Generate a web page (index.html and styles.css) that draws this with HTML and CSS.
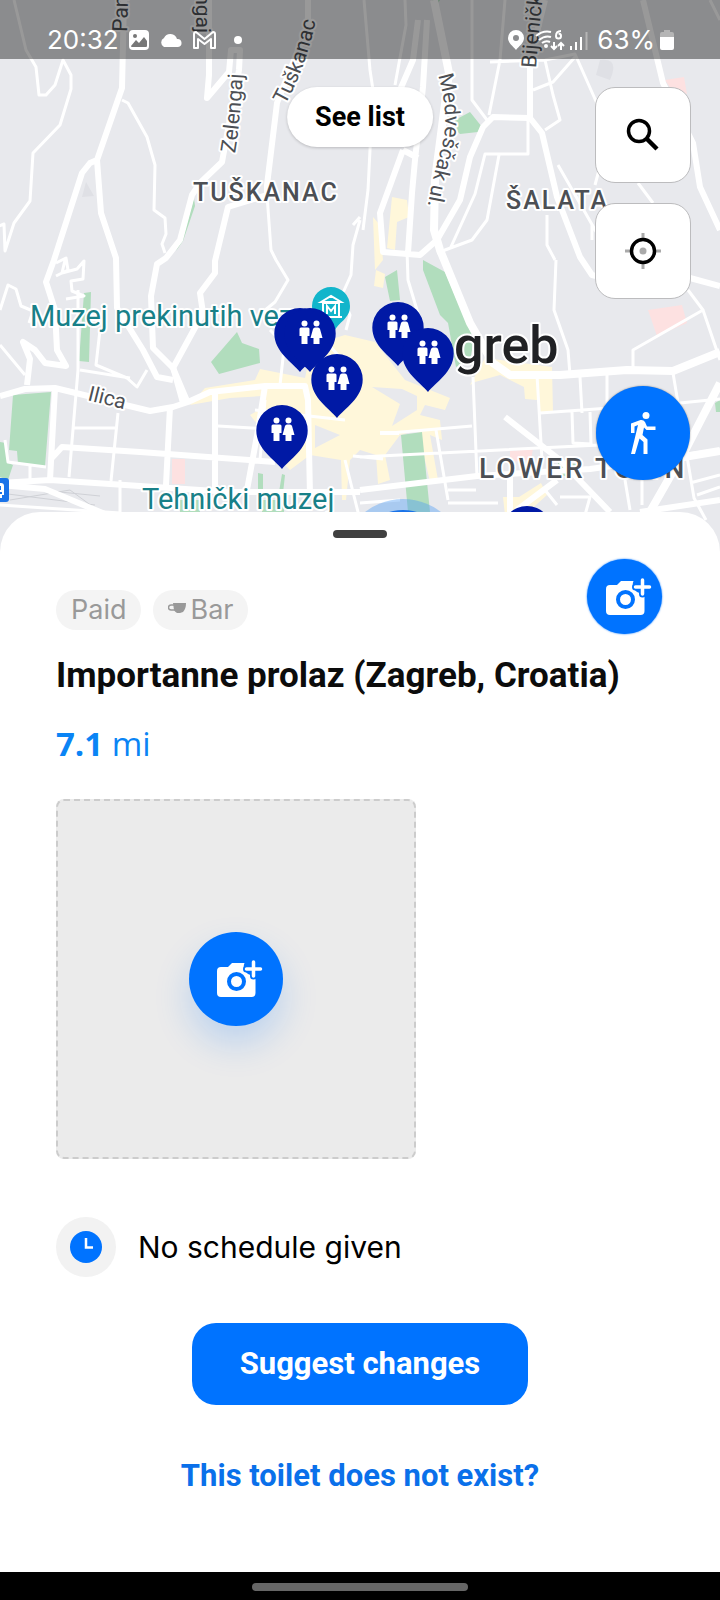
FILE: index.html
```html
<!DOCTYPE html>
<html lang="en">
<head>
<meta charset="utf-8">
<meta name="viewport" content="width=device-width, initial-scale=1">
<title>Importanne prolaz</title>
<link rel="stylesheet" href="styles.css">
</head>
<body>
<svg class="sprite" aria-hidden="true">
  <symbol id="camera-plus" viewBox="0 0 46 38">
    <path d="M4 7h7l4-4h12.500a8.500 8.500 0 0 0 7.500 12h3.500v18a4 4 0 0 1-4 4H4a4 4 0 0 1-4-4V11a4 4 0 0 1 4-4z" fill="#fff"/>
    <circle cx="19.500" cy="21.500" r="7.500" fill="none" stroke="#0073ff" stroke-width="4"/>
    <path d="M36.500 2v14M29.500 9h14" stroke="#0073ff" stroke-width="7" stroke-linecap="round"/>
    <path d="M36.500 2v14M29.500 9h14" stroke="#fff" stroke-width="3.500" stroke-linecap="round"/>
  </symbol>
  <symbol id="pin-shape" viewBox="-26 0 52 64" overflow="visible">
    <path d="M0 64C-7 55-25.700 44-25.700 25.500A25.700 25.500 0 0 1 25.700 25.500C25.700 44 7 55 0 64z" fill="#0019a5"/>
  </symbol>
  <symbol id="pin" viewBox="-26 0 52 64" overflow="visible">
    <path d="M0 64C-7 55-25.700 44-25.700 25.500A25.700 25.500 0 0 1 25.700 25.500C25.700 44 7 55 0 64z" fill="#0019a5"/>
    <g fill="#fff">
      <circle cx="-5.500" cy="15.500" r="3"/><circle cx="6.500" cy="15.500" r="3"/>
      <path d="M-9 19.500h7q1.500 0 1.500 1.500v7h-2v8h-6v-8h-2v-7q0-1.500 1.500-1.500zM5 19.500h3q1.500 0 2 1.500l2.500 9h-3v6h-6v-6h-3l2.500-9q.5-1.500 2-1.500z"/>
    </g>
  </symbol>
</svg>

<div class="screen">
  <section class="map" aria-label="Map">
    <svg class="map-canvas" viewBox="0 0 720 552" preserveAspectRatio="xMidYMin slice">
      <rect width="720" height="552" fill="#e8e9ed"/>
      <g fill="#fff7da">
        <path d="M190 405l15-17 50-8 5-11 45 9 7-33 33-10 30 7 30 38 45 18-5 12-20-5-5 10 20 5 2 20-12-5 8 45-8 2-12-52-18 5-15 20 5 25-12 4-2-29-16-5-10 10-4 40h-4l-1-40-31-5-20 15-5-5 15-15-38-20-12-15 12-7v-12l-32 2z"/>
        <path d="M470 385l15-27 67 9 1 46-13-1-3-12-12-1-1-12-24-12-25 7z"/>
        <path d="M392 197l15 3 2 17-12 5-2 28-8-2zM373 217l7 8 3 35-8 10zM376 270l9 4-2 14-9-2zM503 497l16 0 22-14 6 12-22 20h-20z"/>
      </g>
      <path d="M315 425l25 10-25 13zM372 387l30 2 15 7v14l-25 16 8-22z" fill="#e8e9ed"/>
      <g fill="#b1ddbd">
        <path d="M13 395l38-3-6 74-27-2-1-13-8-1zM0 442l6 1 2 20 5 2-5 15-8-3zM84 293l7-1-2 70-10-1zM237 332l5 11 17 6 1 14-41 11-8-12z"/>
        <path d="M423 260l22 12 29 68-4 20-14 7-8-44-8-8-17-45zM385 277l12-7 3 30-10 1zM401 435l21-3 8 80h-22zM455 120l15-8 12 15-4 5-18 2-7-7z"/>
        <path d="M194 198l1 8-12 35-7 10 8-17zM258 473l5 1v20h-5zM282 474l3 1-2 18-4-1zM180 500h20v12h-20zM262 500h22v12h-22zM558 462l18 2-2 12h-16zM715 403l5-3v12h-4zM432 0h8l-4 6z"/>
      </g>
      <path d="M172 459h13v25h-13zM648 310l34-5 5 18-30 13zM510 451l23-2-2 11-21 2zM665 80l19-3 3 17-16-5z" fill="#fde1e1"/>
      <path d="M600 60q20-3 10 20l-14-5zM82 197l4-15 8 14z" fill="#dfe0e5"/>
      <path d="M0 486l100 10M0 493l95 12M10 500l60-10 30 22" class="rail"/>
      <g class="road thin">
        <path d="M14 0l12 50 10 17 3 28h7l9-10 8-25 8 15v14l-11 36-27 28-3 48-16 22-9 28-1-27-7 3M122 100l6 3 19 34 8 28-1 45 11 8 1 16-4 10 3 9M56 263l10-5 2 12-12 6M65 260l-3 13 15-4 7-8-1 18-12 2 1 10 12 5-18 3"/>
        <path d="M267 195l4 55 5 10 12 20-13 22-17 14M360 220l-7 25-2 30-9 20 8 20-4 15M353 225l7-8M0 310l8-25 8 4 5 17 12 5-4 12M0 345l25 30M78 290v80l-9 107M100 330l-4 35 31 13 10 9 10-17M80 370l50 8M118 413l-7 68M73 428h42M120 480v32M30 465v15M5 440l3 22 38 5M218 426l50 3M265 400l-5 60M285 340l-5 45M270 330l10 10 40-5 18 20"/>
        <path d="M364 0l6 70 3 20-5 100-5 40M405 0l1 25-11 60M472 0v100l15 20M505 0l-5 60-11 55M490 62l55-2 30-6 20 45 15 30M545 60l8 35 7 25-15 10M533 90l20-8 22-25M528 120v34h-43l-10 40-25 55M499 155l-12 65-15 20-35 13M547 215v30l8 15M558 165l40 70M595 185l8-30-5-20M638 183l15 20M592 240l0-15M720 20l-10-20"/>
        <path d="M407 250l1 30 15 50M556 260l-2 50 14 40 2 25M473 377l4 100M537 375l5 85M540 413l140-10 40-4M360 457l260-13M580 377l2 36M607 375v37M572 412l1 31 18 1-1-32M673 373l21 125 12 22M633 370v-20l70-40-15-20M703 310l17 50M390 433l82-7M436 430l12 70M448 490h28M448 503h50M560 497h30l-5 18M545 490l12 15M360 503l40-3M690 483l30-8M642 480v25M697 495l23-8M625 480l5 30M0 505l120 8M345 460l15 60M353 456l30 3M255 410l90 10"/>
      </g>
      <path d="M380 433h19" stroke="#fff" stroke-width="4"/>
      <g class="road">
        <path d="M124 0l-2 88-25 72-7 3-8 10-28 87-8 22 9 28 2 40 9 16-21-3-10-13-12-8 7 17-3 26M97 160l4 53 15 45 1 50 26 42 14 27 16 3M209 0v75l-2 23 22-26 2-22h9l-1 20-17 92-22 21-8 12-12 45-14 18-9 6-6 32 2 52 20 20 14 33M308 0v25l-31 78-10 82 0 10-39 12-13 54v12l-15 20 3 20-30 55"/>
        <path d="M0 396l25-7 30-1 95 23 23-4 15-5 22-10 55-6h40l3 14 2 96M55 388l-5 92-50 3M50 460l12-13 78 5 135 10M50 480l180 12h130M170 407l-4 78M215 392v100M265 386l-7 44-11 60M0 485l45 4 60 25M173 367l10 36"/>
        <path d="M418 20l-5 40-13 30M427 20l-4 67-8 73-3 33-4 60M403 150l15 8M403 150l-23 63 3 39 37 3 17-15 23-40 10-43 13-30 10-10 37 1 12 15 15 64 23 60 12 18 50 12M530 118V60l15-60M643 0l20 83 30 60 7 44 20 43M690 278l30 8"/>
        <path d="M360 490l117-14 113-7 130-18M505 417l55 43 50 52M510 477v35M517 510l40-30M640 512l80-12" />
      </g>
      <path class="road wide" d="M434 0l15 73-14 107-1 50 6 20 30 73 23 40 17 12h50l67-5 46 1 47-19M720 383l-33 64-40 70M720 451l-60 10"/>

      <g class="label street">
        <path id="l-med" d="M438 75Q450 115 442 146Q433 175 427 210" fill="none" stroke="none"/>
        <path id="l-zel" d="M235 153Q240 125 243 70" fill="none" stroke="none"/>
        <path id="l-tus" d="M285 105Q305 70 316 20" fill="none" stroke="none"/>
        <path id="l-bij" d="M536 68Q538 35 548 -50" fill="none" stroke="none"/>
        <text><textPath href="#l-med">Medveščak ul.</textPath></text>
        <text><textPath href="#l-zel">Zelengaj</textPath></text>
        <text><textPath href="#l-tus">Tuškanac</textPath></text>
        <text><textPath href="#l-bij">Bijenička</textPath></text>
        <text transform="translate(127 32) rotate(-88)">Pan</text>
        <text transform="translate(196 33) rotate(90)" text-anchor="end">ngaj</text>
        <text transform="translate(87 400) rotate(14)">Ilica</text>
      </g>
      <g class="label district">
        <text x="193" y="201">TUŠKANAC</text>
        <text x="506" y="209">ŠALATA</text>
        <text class="large" x="479" y="478">LOWER TOWN</text>
      </g>
      <g class="label museum">
        <text x="30" y="326">Muzej prekinutih vez</text>
        <text x="142" y="509">Tehnički muzej</text>
      </g>
      <text class="label city" x="454" y="363">greb</text>

      <path d="M331 287a19 19 0 0 1 19 19c0 13-11 15-17 27-8-10-21-14-21-27a19 19 0 0 1 19-19z" fill="#12b5cb"/>
      <path d="M321 302l10-6 10 6zM322 303h18M323 304v12M339 304v12M320 317h22M327 314v-8l4 5 4-5v8" fill="none" stroke="#fff" stroke-width="2"/>
      <rect x="-14" y="478" width="23" height="24" rx="3" fill="#1a73e8"/>
      <path d="M-8 483h9q3 0 3 3v9h-2v3h-3v-3h-7z" fill="#fff"/><path d="M-4 486h5v4h-5zM0 492h2v2H0z" fill="#1a73e8"/>
      <circle cx="403" cy="561" r="62" fill="#4a9af5" opacity=".4"/>
      <circle cx="403" cy="561" r="51" fill="#1a73e8"/>
      <use href="#pin-shape" x="274" y="308" width="52" height="64"/>
      <use href="#pin" x="284" y="308" width="52" height="64"/>
      <use href="#pin" x="372" y="302" width="52" height="64"/>
      <use href="#pin" x="402" y="328" width="52" height="64"/>
      <use href="#pin" x="311" y="354" width="52" height="64"/>
      <use href="#pin" x="256" y="405" width="52" height="64"/>
      <use href="#pin" x="501" y="506" width="52" height="64"/>
    </svg>

    <header class="status-bar">
      <div class="status-group">
        <span>20:32</span>
        <svg width="22" height="22" viewBox="0 0 22 22"><rect x="1" y="1" width="20" height="20" rx="4" fill="#fff"/><circle cx="7" cy="7" r="2" fill="#777"/><path d="M3 17l5-6 3 3 5-6 3 4v5q0 1-1 1H4q-1 0-1-1z" fill="#777"/></svg>
        <svg width="24" height="22" viewBox="0 0 24 22"><path d="M5 18a5 5 0 0 1 0-9 7 7 0 0 1 13 1 4 4 0 0 1 1 8z" fill="#fff"/></svg>
        <svg width="25" height="22" viewBox="0 0 25 22"><path d="M2 19V5q0-2 2-2l8.500 7L21 3q2 0 2 2v14h-4v-9l-6.500 5L6 10v9z" fill="none" stroke="#fff" stroke-width="2" stroke-linejoin="round"/></svg>
        <i class="dot"></i>
      </div>
      <div class="status-group status-end">
        <svg class="place" width="18" height="22" viewBox="0 0 18 22"><path d="M9 1a8 8 0 0 1 8 8c0 5-5 8-8 12C6 17 1 14 1 9a8 8 0 0 1 8-8zm0 5a3 3 0 1 0 0 6 3 3 0 0 0 0-6z" fill="#fff" fill-rule="evenodd"/></svg>
        <svg width="30" height="22" viewBox="0 0 30 22" fill="none" stroke="#fff" stroke-width="2"><path d="M1 7q7-6 15-4M4 11q6-5 12-3M7 14q4-3 8-1M26 2q-5 0-5 5a2.500 2.500 0 1 0 2.500-2.500"/><circle cx="11" cy="17" r="1" fill="#fff"/><path d="M19 13v7m-3-3l3 3 3-3M26 21v-7m-3 3l3-3 3 3"/></svg>
        <svg width="20" height="22" viewBox="0 0 20 22"><path d="M2 17v4M7 13v8M12 8v13" stroke="#fff" stroke-width="2"/><path d="M17.500 3v18" stroke="#b5b5b5" stroke-width="2"/></svg>
        <span class="battery">63%</span>
        <svg width="16" height="22" viewBox="0 0 16 22"><path d="M5 1h6v2h2q2 0 2 2v4H1V5q0-2 2-2h2z" fill="#b5b5b5"/><path d="M1 8h14v11q0 2-2 2H3q-2 0-2-2z" fill="#fff"/></svg>
      </div>
    </header>

    <button class="see-list" type="button">See list</button>
    <div class="map-controls">
      <button class="square" type="button" aria-label="Search">
        <svg width="36" height="36" viewBox="0 0 36 36" fill="none" stroke="#000"><circle cx="14" cy="14" r="10.500" stroke-width="3.500"/><path d="M22 22l10 10" stroke-width="4.500"/></svg>
      </button>
      <button class="square" type="button" aria-label="My location">
        <svg width="38" height="38" viewBox="0 0 38 38"><path d="M19 1v8M19 29v8M1 19h8M29 19h8" stroke="#aaa" stroke-width="3"/><circle cx="19" cy="19" r="11.500" fill="none" stroke="#000" stroke-width="3.500"/><circle cx="19" cy="19" r="3.500" fill="#aaa"/></svg>
      </button>
      <button class="round walk" type="button" aria-label="Walking directions">
        <svg width="26" height="44" viewBox="0 0 26 44" fill="#fff"><circle cx="16" cy="4.500" r="3.500"/><path d="M1 12.500L10.500 9q3-.5 4.500 2l2 4.500h8.500v3.500h-9l-2.500-2.500-1.500 7.500 5 4.500V43h-4V31l-4-3.500L5 43H1L8 14l-3.500 1.500V22H1z"/></svg>
      </button>
    </div>
  </section>

  <main class="sheet">
    <div class="handle"></div>
    <div class="head">
      <div class="chips">
        <span class="chip">Paid</span>
        <span class="chip"><svg width="18" height="18" viewBox="0 0 18 18"><path d="M5 2h13q0 6-3 9l-3 1H9q-2-1-3-3z" fill="#999"/><path d="M6 4H3a2.500 2.500 0 0 0 0 5h4" fill="none" stroke="#999" stroke-width="1.500"/></svg>Bar</span>
      </div>
      <button class="round add-photo" type="button" aria-label="Add photo"><svg width="46" height="38"><use href="#camera-plus"/></svg></button>
    </div>
    <h1>Importanne prolaz (Zagreb, Croatia)</h1>
    <p class="distance"><b>7.1</b> mi</p>
    <div class="photo">
      <button class="round glow" type="button" aria-label="Add the first photo"><svg width="46" height="38"><use href="#camera-plus"/></svg></button>
    </div>
    <div class="schedule">
      <span class="clock"><svg width="32" height="32" viewBox="0 0 32 32"><circle cx="16" cy="16" r="16" fill="#0073ff"/><path d="M16 7v9.500h7" fill="none" stroke="#fff" stroke-width="2.500"/></svg></span>
      <span>No schedule given</span>
    </div>
    <button class="primary" type="button">Suggest changes</button>
    <a class="report" href="#report">This toilet does not exist?</a>
  </main>
  <footer class="nav-bar"><div class="nav-pill"></div></footer>
</div>
</body>
</html>
```
FILE: styles.css
```css
* { box-sizing: border-box; }
body { margin: 0; background: #fff; font-family: Roboto, "Liberation Sans", sans-serif; color: #000; }
button { border: 0; padding: 0; font: inherit; color: inherit; cursor: pointer; }
svg { display: block; flex: none; }
.sprite { position: absolute; width: 0; height: 0; }
.screen { min-height: 100vh; display: flex; flex-direction: column; }

.map { position: relative; height: 552px; overflow: hidden; }
.map-canvas { position: absolute; inset: 0; width: 100%; height: 100%; }
.road { fill: none; stroke: #fff; stroke-width: 6px; stroke-linejoin: round; }
.road.thin { stroke-width: 3px; }
.road.wide { stroke-width: 8px; }
.rail { fill: none; stroke: #cfd1d6; stroke-width: 1px; }
.label { stroke: #fff; stroke-width: 4px; stroke-linejoin: round; paint-order: stroke; }
.street { font-size: 21px; fill: #4c4f54; }
.district { font-size: 25px; font-weight: 500; letter-spacing: 2px; fill: #4c4f54; }
.district .large { font-size: 28px; letter-spacing: 3px; }
.museum { font-size: 29px; fill: #188088; }
.city { font-size: 52px; font-weight: 500; fill: #202124; }

.status-bar { position: absolute; inset: 0 0 auto; height: 59px; padding: 20px 45px 0 47px; display: flex; justify-content: space-between; align-items: center; background: rgba(0, 0, 0, .4); color: #fff; font-family: Inter, sans-serif; font-size: 26px; line-height: 39px; }
.status-group { display: flex; align-items: center; gap: 9px; }
.status-end { gap: 4px; }
.place { margin-right: 6px; }
.battery { margin-left: 4px; }
.dot { width: 8px; height: 8px; margin-left: 8px; border-radius: 50%; background: #fff; }

.see-list { position: absolute; top: 87px; left: 50%; transform: translateX(-50%); padding: 1px 28px 0; border-radius: 30px; background: #fff; box-shadow: 0 1px 3px rgba(0, 0, 0, .2); font-size: 27px; font-weight: 700; line-height: 59px; white-space: nowrap; }
.map-controls { position: absolute; top: 87px; right: 29px; display: flex; flex-direction: column; gap: 20px; }
.square { width: 96px; height: 96px; display: grid; place-items: center; border: 1px solid #bcbcbe; border-radius: 20px; background: #fff; }
.round { width: 94px; height: 94px; display: grid; place-items: center; border-radius: 50%; background: #0073ff; }
.walk { margin-top: 67px; box-shadow: 0 0 2px rgba(0, 0, 0, .4); align-self: center; }

.sheet { position: relative; flex: 1; display: flex; flex-direction: column; margin-top: -40px; padding: 18px 56px 76px; border-radius: 40px 40px 0 0; background: #fff; }
.handle { width: 54px; height: 8px; align-self: center; border-radius: 4px; background: #404040; }
.head { display: flex; justify-content: space-between; align-items: flex-end; margin-top: 21px; }
.chips { display: flex; gap: 12px; padding-bottom: 4px; }
.chip { display: flex; align-items: center; gap: 4px; padding: 0 15px; border-radius: 20px; background: #f4f4f4; color: #999; font-family: Inter, sans-serif; font-size: 27px; line-height: 40px; }
.add-photo { width: 75px; height: 75px; margin-right: 2px; box-shadow: 0 0 2px #0073ff; }
.add-photo svg, .glow svg { margin-left: 8px; }
h1 { margin: 20px 0 0; font-size: 35px; font-weight: 700; line-height: 44px; color: #0c0c0c; }
.distance { margin: 26px 0 0; font-family: "Open Sans", sans-serif; font-size: 33px; line-height: 40px; color: #0a84f5; }
.photo { width: 360px; max-width: 100%; aspect-ratio: 1; margin-top: 35px; display: grid; place-items: center; border: 2px dashed #ccc; border-radius: 8px; background: #ebebeb; }
.glow { box-shadow: 0 18px 36px rgba(0, 115, 255, .2); }
.schedule { display: flex; align-items: center; gap: 22px; margin-top: 57px; padding-top: 1px; font-family: Inter, sans-serif; font-size: 30px; }
.clock { width: 60px; height: 60px; display: grid; place-items: center; border-radius: 50%; background: #f2f2f2; }
.primary { align-self: center; margin-top: 46px; padding: 0 48px; border-radius: 24px; background: #0073ff; color: #fff; font-size: 31px; font-weight: 700; line-height: 82px; }
.report { align-self: center; margin-top: 51px; color: #0a70ea; font-size: 31px; font-weight: 700; line-height: 40px; text-decoration: none; }
.nav-bar { height: 29px; display: grid; place-items: center; background: #000; }
.nav-pill { width: 30%; height: 8px; border-radius: 4px; background: #666; }
```
